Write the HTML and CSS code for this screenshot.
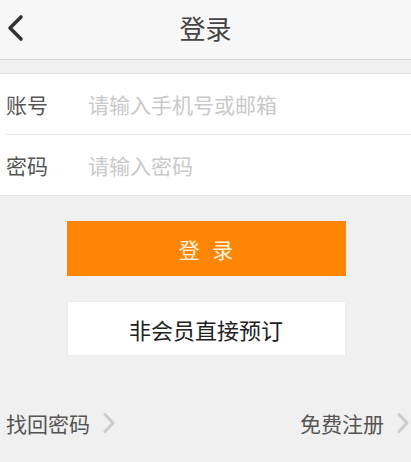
FILE: index.html
```html
<!DOCTYPE html>
<html lang="zh">
<head>
<meta charset="utf-8">
<link rel="stylesheet" href="styles.css">
</head>
<body>
<div class="page">
  <header class="topbar">
    <span class="back">
      <svg width="20" height="30" viewBox="0 0 20 30"><path d="M17 4 L6 15 L17 26" fill="none" stroke="#333" stroke-width="3.6" stroke-linecap="round" stroke-linejoin="round"/></svg>
    </span>
    <h1 class="title">登录</h1>
  </header>
  <div class="form">
    <div class="row">
      <span class="label">账号</span>
      <span class="ph">请输入手机号或邮箱</span>
    </div>
    <div class="row">
      <span class="label">密码</span>
      <span class="ph">请输入密码</span>
    </div>
  </div>
  <div class="actions">
    <div class="btn primary">登 录</div>
    <div class="btn secondary">非会员直接预订</div>
  </div>
  <div class="links">
    <span class="link">找回密码<svg class="chev" width="14" height="24" viewBox="0 0 14 24"><path d="M3 3.5 L11 12 L3 20.5" fill="none" stroke="#cccccc" stroke-width="3" stroke-linecap="round" stroke-linejoin="round"/></svg></span>
    <span class="link">免费注册<svg class="chev" width="14" height="24" viewBox="0 0 14 24"><path d="M3 3.5 L11 12 L3 20.5" fill="none" stroke="#cccccc" stroke-width="3" stroke-linecap="round" stroke-linejoin="round"/></svg></span>
  </div>
</div>
</body>
</html>
```

FILE: styles.css
```css
html, body {
  margin: 0;
  padding: 0;
  background: #f0f0f0;
  font-family: "Noto Sans CJK SC", "Noto Sans", sans-serif;
}
.page {
  width: 411px;
  height: 462px;
  overflow: hidden;
}
.topbar {
  height: 60px;
  box-sizing: border-box;
  padding-bottom: 4px;
  background: #f7f7f7;
  border-bottom: 1px solid #d6d6d6;
  position: relative;
  display: flex;
  align-items: center;
  justify-content: center;
}
.back {
  position: absolute;
  left: 4px;
  top: 13px;
  display: flex;
}
.title {
  margin: 0;
  font-size: 26px;
  font-weight: normal;
  color: #444;
  line-height: 1;
}
.form {
  margin-top: 13px;
  background: #fff;
  border-top: 1px solid #e4e4e4;
  border-bottom: 1px solid #e4e4e4;
}
.row {
  height: 60px;
  display: flex;
  align-items: center;
  padding-left: 6px;
}
.row + .row {
  border-top: 1px solid #e6e6e6;
  margin-left: 6px;
  padding-left: 0;
}
.label {
  width: 82px;
  font-size: 21px;
  color: #555;
}
.ph {
  font-size: 21px;
  color: #c9c9c9;
}
.actions {
  display: flex;
  flex-direction: column;
  align-items: center;
  gap: 25px;
  margin-top: 25px;
  padding-left: 1px;
}
.btn {
  width: 279px;
  height: 55px;
  display: flex;
  align-items: center;
  justify-content: center;
}
.primary {
  background: #ff8604;
  color: #fff3e0;
  font-size: 21px;
  letter-spacing: 4px;
  text-indent: 4px;
}
.secondary {
  background: #fff;
  color: #222;
  font-size: 22px;
  border: 1px solid #ebebeb;
  box-sizing: border-box;
}
.links {
  display: flex;
  justify-content: space-between;
  margin-top: 52px;
  padding: 0 1px 0 6px;
}
.link {
  font-size: 21px;
  line-height: 30px;
  color: #555;
  display: flex;
  align-items: center;
}
.chev {
  margin-left: 12px;
  display: block;
}
```
